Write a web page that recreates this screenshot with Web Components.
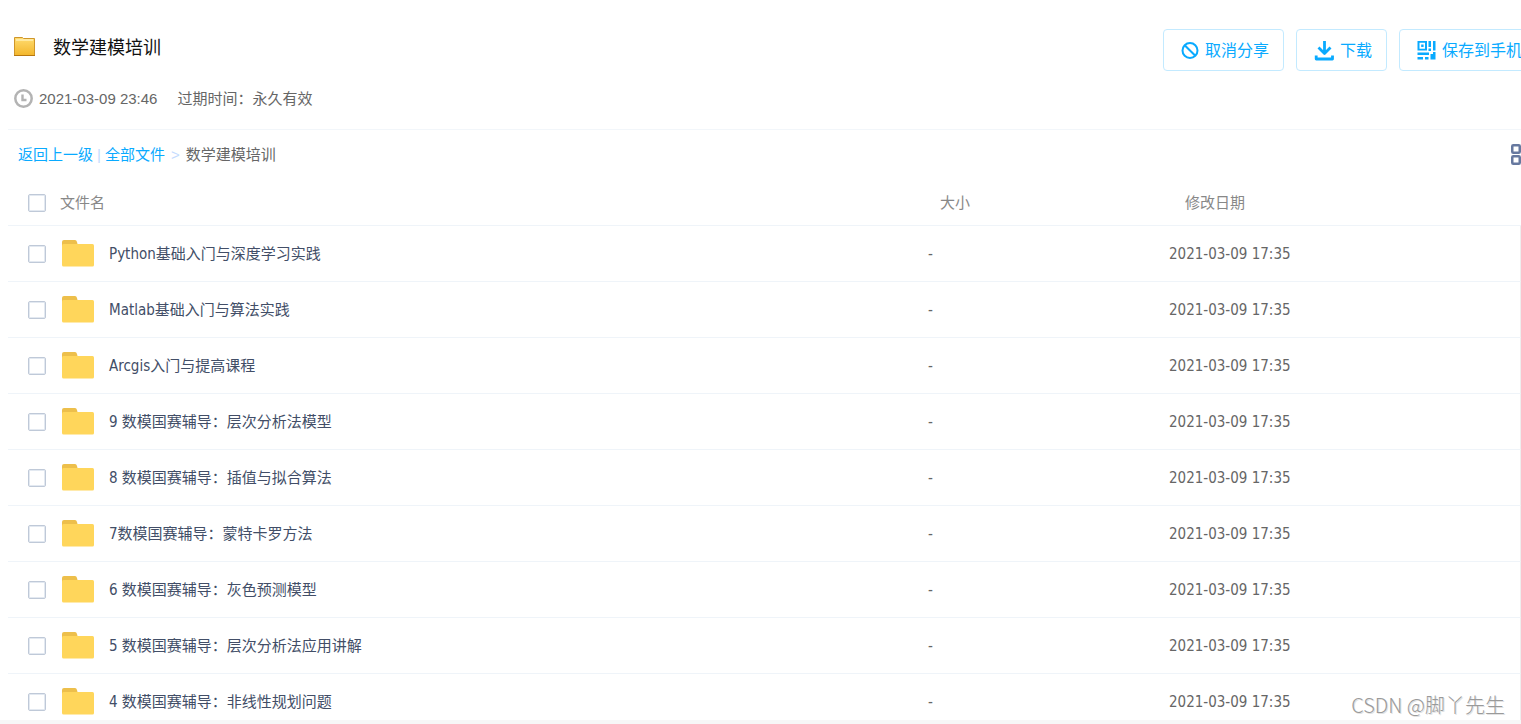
<!DOCTYPE html>
<html lang="zh-CN">
<head>
<meta charset="utf-8">
<title>数学建模培训</title>
<style>
    body {
        margin: 0;
        background: #ffffff;
        color: #666666;
        font: 15px/20px "Liberation Sans", "Noto Sans CJK SC", sans-serif;
        --color-accent: #09aaff;
        --color-line: #eff4f9;
        --color-muted: #888888;
        --color-file: #424e67;
        --font-table: "DejaVu Sans Condensed", "Noto Sans", "Noto Sans CJK SC", sans-serif;
    }
</style>
</head>
<body>

<template id="template-icon">
    <style>
        :host { display: inline-flex; flex: none; }
        svg { display: block; }
    </style>
</template>

<template id="template-action">
    <style>
        :host { display: block; flex: none; }
        button {
            display: flex;
            align-items: center;
            gap: 6px;
            height: 42px;
            padding: 1px 14px 0 17px;
            border: 1px solid #c3eaff;
            border-radius: 4px;
            background: #ffffff;
            color: var(--color-accent);
            font: inherit;
            font-size: 16px;
            white-space: nowrap;
            cursor: pointer;
        }
        button:hover { background: #f5fbff; }
    </style>
    <button type="button"><slot name="icon"></slot><span><slot></slot></span></button>
</template>

<template id="template-header">
    <style>
        :host { display: block; margin-left: 8px; border-bottom: 1px solid #f2f6fa; }
        .top {
            display: flex;
            justify-content: space-between;
            align-items: flex-start;
            padding-top: 29px;
            /* the action bar runs past the edge of the window */
            margin-right: -16px;
        }
        h1 {
            display: flex;
            align-items: center;
            gap: 18px;
            margin: 6px 0 0 5px;
            color: #111111;
            font-size: 18px;
            line-height: 26px;
            font-weight: 400;
        }
        .actions { display: flex; gap: 12px; }
        .meta {
            display: flex;
            align-items: center;
            gap: 20px;
            padding: 18px 0 20px 5px;
        }
        .time { display: flex; align-items: center; gap: 6px; }
    </style>
    <div class="top">
        <h1><ui-icon name="share"></ui-icon><slot name="title"></slot></h1>
        <div class="actions"><slot name="actions"></slot></div>
    </div>
    <div class="meta">
        <span class="time"><ui-icon name="clock"></ui-icon><slot name="time"></slot></span>
        <slot name="expiry"></slot>
    </div>
</template>

<template id="template-crumbs">
    <style>
        :host {
            display: flex;
            justify-content: space-between;
            align-items: center;
            height: 50px;
            padding-left: 18px;
        }
        nav { display: flex; gap: 6px; }
        a { color: var(--color-accent); text-decoration: none; }
        .sep { color: #c4dbfe; }
        .bar { margin: 0 -2px; }
        .view {
            margin-right: -11px;
            padding: 2px 0 0;
            border: 0;
            background: none;
            cursor: pointer;
        }
    </style>
    <nav aria-label="路径">
        <a href="#up">返回上一级</a>
        <span class="sep bar">|</span>
        <a href="#all">全部文件</a>
        <span class="sep">&gt;</span>
        <span><slot></slot></span>
    </nav>
    <button class="view" type="button" aria-label="切换视图"><ui-icon name="grid"></ui-icon></button>
</template>

<template id="template-list">
    <style>
        :host { display: block; padding-left: 8px; font-family: var(--font-table); }
        table {
            width: 100%;
            table-layout: fixed;
            border-collapse: separate;
            border-spacing: 0;
        }
        th, td {
            box-sizing: border-box;
            padding: 0;
            text-align: left;
            font-weight: normal;
            border-bottom: 1px solid var(--color-line);
        }
        th { height: 46px; color: var(--color-muted); }
        td { height: 56px; }
        td:last-child { border-right: 1px solid #eeeeee; }
        .size { width: 241px; }
        .date { width: 352px; }
        th.size { padding-left: 12px; }
        th.date { padding-left: 16px; }
        .cell { display: flex; align-items: center; padding-left: 20px; }
        th .cell { gap: 14px; }
        td .cell { gap: 16px; }
        label { color: var(--color-file); }
        th label { color: inherit; }
        td label { display: flex; align-items: center; gap: 15px; }
        input {
            appearance: none;
            flex: none;
            box-sizing: border-box;
            width: 18px;
            height: 18px;
            margin: 0;
            border: 1px solid #bfc9d8;
            border-radius: 2px;
            box-shadow: inset 0 0 0 1px #e3e9f1;
            background: #ffffff;
        }
        input:checked { background: var(--color-accent); border-color: var(--color-accent); }
    </style>
    <table>
        <thead>
            <tr>
                <th class="name"><div class="cell"><input type="checkbox" id="all"><label for="all">文件名</label></div></th>
                <th class="size">大小</th>
                <th class="date">修改日期</th>
            </tr>
        </thead>
        <tbody></tbody>
    </table>
</template>

<template id="template-page">
    <style>
        :host {
            position: relative;
            display: flex;
            flex-direction: column;
            box-sizing: border-box;
            height: 100vh;
            overflow: hidden;
            border-bottom: 4px solid #f7f7f7;
        }
        ::slotted(*) { flex: none; }
        .mark {
            position: absolute;
            right: 16px;
            bottom: 0;
            color: #9a9a9a;
            font: 20px/30px "Noto Sans CJK SC", sans-serif;
            font-weight: 300;
            text-shadow: 1px 1px 0 #e2e2e2;
            pointer-events: none;
        }
    </style>
    <slot></slot>
    <div class="mark"><slot name="mark"></slot></div>
</template>

<share-page>
    <share-header>
        <span slot="title">数学建模培训</span>
        <action-button slot="actions"><ui-icon slot="icon" name="ban"></ui-icon>取消分享</action-button>
        <action-button slot="actions"><ui-icon slot="icon" name="download"></ui-icon>下载</action-button>
        <action-button slot="actions"><ui-icon slot="icon" name="qrcode"></ui-icon>保存到手机</action-button>
        <span slot="time">2021-03-09 23:46</span>
        <span slot="expiry">过期时间：永久有效</span>
    </share-header>
    <path-crumbs>数学建模培训</path-crumbs>
    <file-list></file-list>
    <span slot="mark">CSDN @脚丫先生</span>
</share-page>

<script>
    const icons = {
        share: `<svg width="22" height="22" viewBox="0 0 22 22">
            <defs><linearGradient id="g" x1="0" y1="0" x2="0" y2="1"><stop offset="0" stop-color="#ffdc70"/><stop offset="1" stop-color="#f3b62b"/></linearGradient></defs>
            <path d="M1.5 18.5v-18h8l1 1h11v17z" fill="url(#g)" stroke="#cf962a"/>
            <path d="M3 3h17" stroke="#fff0b5" stroke-width="1.500"/><path d="M1 18.500h21" stroke="#b8770f"/></svg>`,
        clock: `<svg width="20" height="20" viewBox="0 0 20 20" fill="none" stroke="#b3b3b3">
            <circle cx="10.500" cy="9.500" r="8.200" stroke-width="2.500"/><path d="M9.500 5.500V11h4" stroke-width="2.400"/></svg>`,
        ban: `<svg width="18" height="18" viewBox="0 0 18 18" fill="none" stroke="#09aaff" stroke-width="2">
            <circle cx="9" cy="8.500" r="7.500"/><path d="M3.700 3.200l10.600 10.600"/></svg>`,
        download: `<svg width="20" height="20" viewBox="0 0 20 20" fill="none" stroke="#09aaff" stroke-linejoin="round">
            <path d="M10.500 0v12M4.500 6.500l6 6 6-6" stroke-width="2.800"/><path d="M2.200 14.500v3.500h16.300v-3.500" stroke-width="2.800"/></svg>`,
        qrcode: `<svg width="19" height="19" viewBox="0 0 19 19" fill="#09aaff">
            <path fill-rule="evenodd" d="M.5 0h9.500v9.500H.5zM2.500 1.800v6H8v-6z"/>
            <path d="M4.200 3.600h2.400v2.400H4.200zM11.500 0h2.500v6h-2.500zM16 0h2.500v9.500H16zM11.500 7.500H14v2.500h-2.500zM.5 11.500h11.500v2.500H.5zM13.500 13h5v5.500h-5zM16 11h2.500v3H16zM.5 16h5.500v2.500H.5zM8 16h3.500v2.500H8z"/></svg>`,
        grid: `<svg width="21" height="21" viewBox="0 0 21 21" fill="none" stroke="#66789f" stroke-width="2.500">
            <rect x="1.250" y="1.250" width="7.500" height="7.500" rx="1"/><rect x="12.250" y="1.250" width="7.500" height="7.500" rx="1"/>
            <rect x="1.250" y="12.250" width="7.500" height="7.500" rx="1"/><rect x="12.250" y="12.250" width="7.500" height="7.500" rx="1"/></svg>`,
        folder: `<svg width="32" height="27" viewBox="0 0 32 27">
            <path d="M0 8V2q0-2 2-2h11q1.500 0 2 2l1 4z" fill="#edbf4b"/>
            <rect y="4" width="32" height="22.500" rx="1.500" fill="#ffd65b"/></svg>`,
    };

    const date = '2021-03-09 17:35';
    const files = [
        'Python基础入门与深度学习实践',
        'Matlab基础入门与算法实践',
        'Arcgis入门与提高课程',
        '9 数模国赛辅导：层次分析法模型',
        '8 数模国赛辅导：插值与拟合算法',
        '7数模国赛辅导：蒙特卡罗方法',
        '6 数模国赛辅导：灰色预测模型',
        '5 数模国赛辅导：层次分析法应用讲解',
        '4 数模国赛辅导：非线性规划问题',
    ].map(name => ({ name, size: '-', date }));

    class TemplateElement extends HTMLElement {
        constructor(id) {
            super();
            const template = document.getElementById(id).content;
            this.shadow = this.attachShadow({ mode: 'open' });
            this.shadow.appendChild(template.cloneNode(true));
        }
    }

    customElements.define('ui-icon', class extends TemplateElement {
        constructor() { super('template-icon'); }
        connectedCallback() {
            if (this.shadow.querySelector('svg')) return;
            this.shadow.innerHTML += icons[this.getAttribute('name')];
            this.shadow.querySelector('svg').setAttribute('aria-hidden', 'true');
        }
    });

    customElements.define('action-button', class extends TemplateElement {
        constructor() { super('template-action'); }
    });

    customElements.define('share-header', class extends TemplateElement {
        constructor() { super('template-header'); }
    });

    customElements.define('path-crumbs', class extends TemplateElement {
        constructor() { super('template-crumbs'); }
    });

    customElements.define('file-list', class extends TemplateElement {
        constructor() {
            super('template-list');
            const all = this.shadow.querySelector('#all');
            all.onchange = () => this.shadow.querySelectorAll('tbody input').forEach(e => e.checked = all.checked);
        }
        connectedCallback() {
            this.shadow.querySelector('tbody').innerHTML = files.map((file, i) => `
                <tr>
                    <td class="name"><div class="cell">
                        <input type="checkbox" id="file-${i}">
                        <label for="file-${i}"><ui-icon name="folder"></ui-icon><span>${file.name}</span></label>
                    </div></td>
                    <td class="size">${file.size}</td>
                    <td class="date">${file.date}</td>
                </tr>`).join('');
        }
    });

    customElements.define('share-page', class extends TemplateElement {
        constructor() { super('template-page'); }
    });
</script>
</body>
</html>
